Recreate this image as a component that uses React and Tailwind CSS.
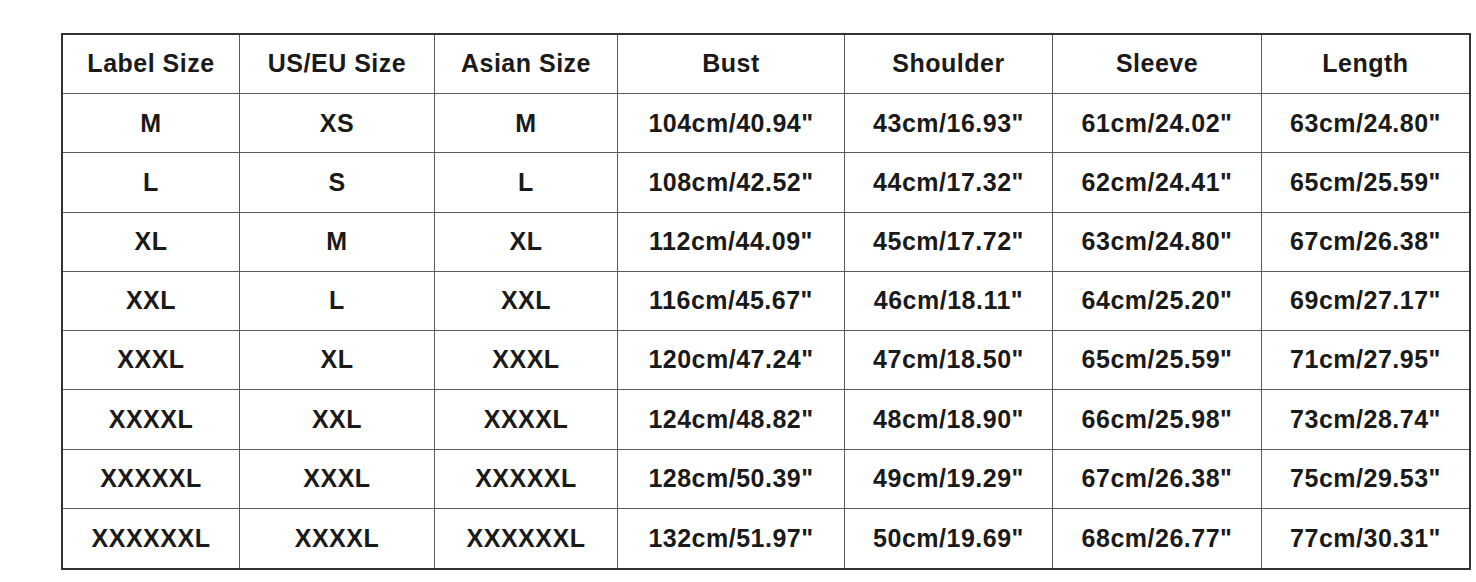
import React from "react";

const headers = ["Label Size", "US/EU Size", "Asian Size", "Bust", "Shoulder", "Sleeve", "Length"];
const rows = [
  ["M", "XS", "M", "104cm/40.94\"", "43cm/16.93\"", "61cm/24.02\"", "63cm/24.80\""],
  ["L", "S", "L", "108cm/42.52\"", "44cm/17.32\"", "62cm/24.41\"", "65cm/25.59\""],
  ["XL", "M", "XL", "112cm/44.09\"", "45cm/17.72\"", "63cm/24.80\"", "67cm/26.38\""],
  ["XXL", "L", "XXL", "116cm/45.67\"", "46cm/18.11\"", "64cm/25.20\"", "69cm/27.17\""],
  ["XXXL", "XL", "XXXL", "120cm/47.24\"", "47cm/18.50\"", "65cm/25.59\"", "71cm/27.95\""],
  ["XXXXL", "XXL", "XXXXL", "124cm/48.82\"", "48cm/18.90\"", "66cm/25.98\"", "73cm/28.74\""],
  ["XXXXXL", "XXXL", "XXXXXL", "128cm/50.39\"", "49cm/19.29\"", "67cm/26.38\"", "75cm/29.53\""],
  ["XXXXXXL", "XXXXL", "XXXXXXL", "132cm/51.97\"", "50cm/19.69\"", "68cm/26.77\"", "77cm/30.31\""],
];

export default function App() {
  const all = [headers, ...rows];
  return (
    <div className="w-[1476px] h-[582px] bg-white pl-[61px] pt-[33px] overflow-hidden" style={{ fontFamily: '"Liberation Sans", Arial, sans-serif' }}>
      <div className="w-[1410px] h-[537px] border-2 border-[#333333] grid grid-cols-[177px_195px_183px_227px_208px_209px_207px] grid-rows-9">
        {all.map((r, ri) =>
          r.map((c, ci) => (
            <div
              key={ri + "-" + ci}
              className={
                "flex items-center justify-center text-[25px] font-bold tracking-[0.5px] text-[#1a1a1a] border-[#5a5a5a] " +
                (ci < 6 ? "border-r " : "") +
                (ri < 8 ? "border-b" : "")
              }
            >
              {c}
            </div>
          ))
        )}
      </div>
    </div>
  );
}
